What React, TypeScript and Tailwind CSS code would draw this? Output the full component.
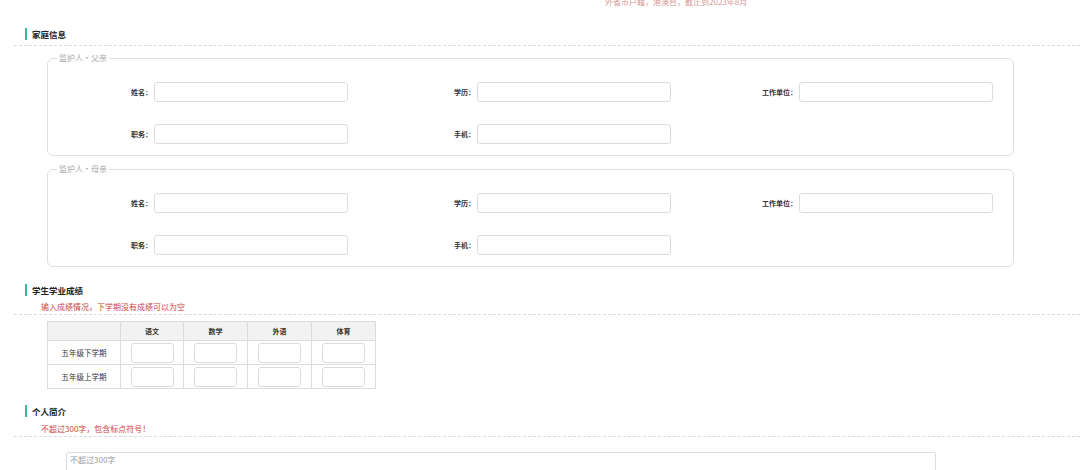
import React from "react";

const font = { fontFamily: '"Noto Sans CJK SC", "Noto Sans", sans-serif' };

function SectionHeader({ title, className = "" }: { title: string; className?: string }) {
  return (
    <div className={`flex h-[12px] items-center ${className}`}>
      <div className="ml-[25px] h-[12px] w-[2px] bg-[#35b99d]" />
      <div className="ml-[5px] text-[8.5px] font-bold leading-[12px] text-[#222]">{title}</div>
    </div>
  );
}

function Dashed({ className = "" }: { className?: string }) {
  return <div className={`ml-[14px] border-t border-dashed border-[#dadada] ${className}`} />;
}

function Field({ label }: { label: string }) {
  return (
    <div className="flex items-center">
      <div className="w-[104px] text-right text-[7px] font-bold leading-[10px] text-[#333]">{label}</div>
      <div className="ml-[2px] h-[20px] w-[194px] rounded-[3px] border border-[#dcdcdc] bg-white" />
    </div>
  );
}

function Guardian({ who }: { who: string }) {
  return (
    <fieldset className="w-[967px] rounded-[6px] border border-[#dedede] pb-[11px] pt-[19px]">
      <legend className="ml-[9px] px-[2px] text-[8px] leading-[10px] text-[#a8a8a8]">监护人•{who}</legend>
      <div className="flex flex-col gap-[22px]">
        <div className="grid grid-cols-[323px_322px_1fr]">
          <Field label="姓名：" />
          <Field label="学历：" />
          <Field label="工作单位：" />
        </div>
        <div className="grid grid-cols-[323px_322px_1fr]">
          <Field label="职务：" />
          <Field label="手机：" />
          <div />
        </div>
      </div>
    </fieldset>
  );
}

function ScoreInput() {
  return <div className="mx-auto h-[20px] w-[43px] rounded-[3px] border border-[#dcdcdc] bg-white" />;
}

export default function App() {
  const subjects = ["语文", "数学", "外语", "体育"];
  const terms = ["五年级下学期", "五年级上学期"];
  return (
    <div className="h-[470px] w-[1080px] overflow-hidden bg-white text-[#333]" style={font}>
      <div className="-mt-[4px] h-[12px] whitespace-nowrap pl-[605px] text-[8px] leading-[12px] text-[#c0504d] opacity-60">
        外省市户籍，港澳台，截止到2023年8月
      </div>

      <SectionHeader title="家庭信息" className="mt-[20px]" />
      <Dashed className="mt-[5px]" />

      <div className="ml-[47px] mt-[7px] flex flex-col gap-[8px]">
        <Guardian who="父亲" />
        <Guardian who="母亲" />
      </div>

      <SectionHeader title="学生学业成绩" className="mt-[17px]" />
      <div className="ml-[41px] mt-[6px] text-[8px] leading-[10px] text-[#d0423c]">
        输入成绩情况，下学期没有成绩可以为空
      </div>
      <Dashed className="mt-[2px]" />

      <table className="ml-[47px] mt-[6px] w-[328px] table-fixed border-collapse text-[7px] text-[#333]">
        <colgroup>
          <col className="w-[73px]" />
          <col className="w-[63px]" />
          <col className="w-[64px]" />
          <col className="w-[64px]" />
          <col className="w-[64px]" />
        </colgroup>
        <thead>
          <tr className="h-[19px] bg-[#f2f2f2]">
            <th className="border border-[#dcdcdc]" />
            {subjects.map((s) => (
              <th key={s} className="border border-[#dcdcdc] text-center font-bold">
                {s}
              </th>
            ))}
          </tr>
        </thead>
        <tbody>
          {terms.map((t) => (
            <tr key={t} className="h-[24px]">
              <td className="border border-[#dcdcdc] text-center text-[7.5px]">{t}</td>
              {subjects.map((s) => (
                <td key={s} className="border border-[#dcdcdc]">
                  <ScoreInput />
                </td>
              ))}
            </tr>
          ))}
        </tbody>
      </table>

      <SectionHeader title="个人简介" className="mt-[16px]" />
      <div className="ml-[41px] mt-[7px] text-[8px] leading-[10px] text-[#d0423c]">
        不超过300字，包含标点符号！
      </div>
      <Dashed className="mt-[2px]" />

      <div className="ml-[66px] mt-[15px] h-[60px] w-[870px] rounded-[2px] border border-[#dcdcdc] px-[3px] pt-[1px] text-[8px] leading-[12px] text-[#999]">
        不超过300字
      </div>
    </div>
  );
}
